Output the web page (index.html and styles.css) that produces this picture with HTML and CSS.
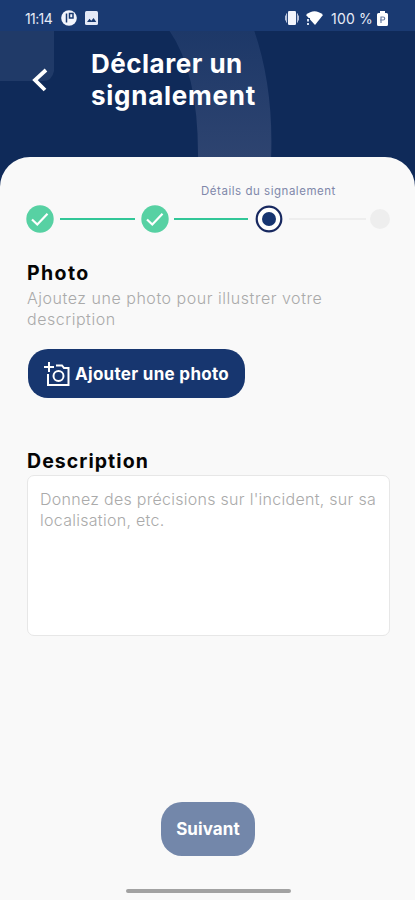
FILE: index.html
```html
<!DOCTYPE html>
<html lang="fr">
<head>
<meta charset="utf-8">
<meta name="viewport" content="width=device-width">
<title>Déclarer un signalement</title>
<link rel="stylesheet" href="styles.css">
</head>
<body>
<header class="header">
  <svg class="header-art" viewBox="0 0 415 190" aria-hidden="true">
    <defs><linearGradient id="fade" x1="0" y1="0" x2="0" y2="1"><stop offset="0" stop-color="#1d3868"/><stop offset="1" stop-color="#2e4470"/></linearGradient></defs>
    <path d="M0 30H54V71Q52 81 43 81H0Z" fill="#203a68"/>
    <path d="M169 30Q199 73 198 160H271Q274 88 254 30Z" fill="url(#fade)"/>
  </svg>
  <div class="status">
    <span class="clock">11:14</span>
    <svg class="app-icon" viewBox="0 0 16 16"><circle cx="8" cy="8" r="7.8" fill="#f3f5fc"/><path d="M5.500 3.500v9M8.500 3.500H12V8H8.500z" fill="none" stroke="#1a3a70" stroke-width="1.500"/></svg>
    <svg class="image-icon" viewBox="0 0 13 14"><rect width="13" height="14" rx="1.5" fill="#e4e9f7"/><path d="M2 11l2.5-3.2 1.8 2L8.6 7l2.7 4z" fill="#1a3a70"/></svg>
    <svg class="vibrate-icon" viewBox="0 0 14 14"><rect x="3" y="0" width="8" height="14" rx="1.3" fill="#f3f5fc"/><path d="M1.6 2.5v9M12.4 2.5v9M.4 4.5v5M13.6 4.5v5" stroke="#c9d1e6"/></svg>
    <svg class="wifi-icon" viewBox="0 0 17 15"><path d="M0 4Q8.5-3.5 17 4L9 14Z" fill="#fff"/><path d="M0 7h4v8H0z" fill="#1a3a70"/><path d="M2 8v2.5M2 12v2" stroke="#d5def1" stroke-width="2"/></svg>
    <span class="battery-text">100 %</span>
    <svg class="battery-icon" viewBox="0 0 11 15"><path d="M3 0h5v2h1.5Q11 2 11 3.5v10Q11 15 9.500 15h-8Q0 15 0 13.500v-10Q0 2 1.500 2H3z" fill="#fff"/><path d="M4 12V6h2.200a1.500 1.500 0 0 1 0 3H3" fill="none" stroke="#6c7fa4" stroke-width="1.200"/></svg>
  </div>
  <div class="title-row">
    <svg class="back" viewBox="0 0 16 24"><path d="M14 2L3 12L13 22" fill="none" stroke="#fff" stroke-width="3.8"/></svg>
    <h1><span class="title-a">Déclarer un</span><br><span class="title-b">signalement</span></h1>
  </div>
</header>
<main class="sheet">
  <div class="step-label">Détails du signalement</div>
  <div class="steps">
    <svg class="dot" viewBox="0 0 28 28"><circle cx="14" cy="14" r="13.700" fill="#57d1a3"/><path d="M6 14.500L11.300 19.500L21.500 8.800" fill="none" stroke="#fff" stroke-width="2.200"/></svg>
    <i class="line"></i>
    <svg class="dot" viewBox="0 0 28 28"><circle cx="14" cy="14" r="13.700" fill="#57d1a3"/><path d="M6 14.500L11.300 19.500L21.500 8.800" fill="none" stroke="#fff" stroke-width="2.200"/></svg>
    <i class="line after"></i>
    <svg class="dot" viewBox="0 0 28 28"><circle cx="14" cy="14" r="12.300" fill="#fff" stroke="#182960" stroke-width="2.200"/><circle cx="14" cy="14" r="7" fill="#173571"/></svg>
    <i class="line idle"></i>
    <i class="dot-idle"></i>
  </div>
  <section class="photo">
    <h2 class="h-photo">Photo</h2>
    <p class="hint">Ajoutez une photo pour illustrer votre<br>description</p>
    <button class="add">
      <svg viewBox="0 0 26 24"><path d="M5 0v10M0 5h10M4 12v11h20.500V6H20l-2-2.500h-6" fill="none" stroke="#fff" stroke-width="2"/><circle cx="14.500" cy="14" r="5" fill="none" stroke="#fff" stroke-width="2"/></svg>
      <span>Ajouter une photo</span>
    </button>
  </section>
  <section class="description">
    <h2 class="h-desc">Description</h2>
    <div class="field">Donnez des précisions sur l'incident, sur sa<br>localisation, etc.</div>
  </section>
  <button class="next"><span>Suivant</span></button>
  <div class="home-bar"></div>
</main>
</body>
</html>
```
FILE: styles.css
```css
* { box-sizing: border-box; }
body { margin: 0; height: 900px; overflow: hidden; background: #f9f9f9; font-family: Inter, "Liberation Sans", sans-serif; }
button { border: 0; padding: 0; font: inherit; color: #fff; }
h1, h2, p { margin: 0; }
span { white-space: nowrap; }
svg { display: block; flex: none; }
.header { position: relative; height: 190px; background: #0f2a59; }
.header-art { position: absolute; inset: 0; width: 415px; height: 190px; }
.status { position: relative; display: flex; align-items: center; height: 31px; padding: 5px 27px 0 25px; background: #1a3a72; color: #e6ebf7; font-size: 14px; }
.clock { width: 36px; letter-spacing: -.6px; }
.app-icon { width: 16px; height: 16px; }
.image-icon { width: 13px; height: 14px; margin-left: 8px; }
.vibrate-icon { width: 14px; height: 14px; margin-left: auto; }
.wifi-icon { width: 17px; height: 15px; margin-left: 7px; }
.battery-text { width: 46px; margin-left: 8px; letter-spacing: .2px; }
.battery-icon { width: 11px; height: 15px; }
.title-row { position: relative; display: flex; padding: 17px 0 0 32px; }
.back { width: 16px; height: 24px; margin-top: 20px; }
h1 { margin-left: 43px; color: #fff; font-size: 26px; line-height: 32px; font-weight: 700; }
.title-a { letter-spacing: .5px; }
.title-b { letter-spacing: .75px; }
.sheet { position: relative; display: flex; flex-direction: column; height: 743px; margin-top: -33px; border-radius: 30px 30px 0 0; background: #f9f9f9; padding: 26px 25px 0 26px; }
.step-label { align-self: flex-start; margin-left: 175px; height: 16px; font-size: 11.500px; line-height: 16px; letter-spacing: .53px; white-space: nowrap; color: #8088aa; }
.steps { display: flex; align-items: center; height: 28px; margin-top: 6px; }
.dot { width: 28px; height: 28px; }
.line { width: 75px; height: 2px; margin: 0 6px; background: #32c798; }
.after { margin-left: 5px; margin-right: 7px; }
.idle { width: 77px; margin: 0 4px 0 6px; background: #eee; }
.dot-idle { width: 20px; height: 20px; border-radius: 50%; background: #eee; }
h2 { margin-left: 1px; font-size: 19.500px; line-height: 26px; font-weight: 650; color: #050505; }
.h-photo { letter-spacing: 1.400px; }
.h-desc { letter-spacing: 1.050px; }
.photo { margin-top: 27px; }
.hint { margin: 2px 0 0 1px; font-size: 16px; line-height: 20.500px; font-weight: 300; letter-spacing: .53px; white-space: nowrap; color: #aaa; }
.add { display: flex; align-items: center; width: 217px; height: 49px; margin: 20px 0 0 2px; padding-left: 16px; border-radius: 20px; background: #17366f; font-size: 17px; font-weight: 700; letter-spacing: .3px; }
.add svg { width: 26px; height: 24px; margin-right: 5px; }
.description { margin-top: 50px; }
.field { width: 363px; height: 161px; margin: 1px 0 0 1px; padding: 13px 12px; border: 1.500px solid #e7e7e7; border-radius: 7px; background: #fff; font-size: 16px; line-height: 20.500px; font-weight: 300; letter-spacing: .28px; white-space: nowrap; color: #aaa; }
.next { align-self: center; width: 94px; height: 54px; margin-top: 166px; border-radius: 21px; background: #7387aa; font-size: 17px; font-weight: 700; letter-spacing: .1px; }
.home-bar { align-self: center; width: 165px; height: 4px; margin-top: 33px; border-radius: 2px; background: #a2a2a2; }
```
